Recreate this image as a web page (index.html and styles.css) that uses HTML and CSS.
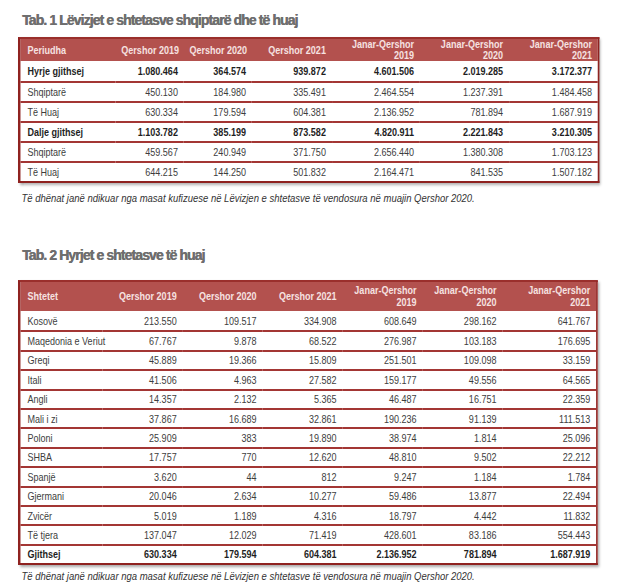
FILE: index.html
```html
<!DOCTYPE html>
<html lang="sq">
<head>
<meta charset="utf-8">
<title>Lëvizjet e shtetasve</title>
<link rel="stylesheet" href="styles.css">
</head>
<body>
<div class="page">
  <h2 class="title title-1">Tab. 1 Lëvizjet e shtetasve shqiptarë dhe të huaj</h2>
  <div class="narrow narrow-1">
    <table class="data data-1">
      <colgroup>
        <col class="c1-n"><col class="c1-a"><col class="c1-a"><col class="c1-b"><col class="c1-c"><col class="c1-d"><col class="c1-d">
      </colgroup>
      <thead>
        <tr>
          <th class="name">Periudha</th>
          <th>Qershor 2019</th>
          <th>Qershor 2020</th>
          <th>Qershor 2021</th>
          <th>Janar-Qershor<br>2019</th>
          <th>Janar-Qershor<br>2020</th>
          <th>Janar-Qershor<br>2021</th>
        </tr>
      </thead>
      <tbody>
        <tr class="strong"><td class="name">Hyrje gjithsej</td><td>1.080.464</td><td>364.574</td><td>939.872</td><td>4.601.506</td><td>2.019.285</td><td>3.172.377</td></tr>
        <tr><td class="name">Shqiptarë</td><td>450.130</td><td>184.980</td><td>335.491</td><td>2.464.554</td><td>1.237.391</td><td>1.484.458</td></tr>
        <tr><td class="name">Të Huaj</td><td>630.334</td><td>179.594</td><td>604.381</td><td>2.136.952</td><td>781.894</td><td>1.687.919</td></tr>
        <tr class="strong"><td class="name">Dalje gjithsej</td><td>1.103.782</td><td>385.199</td><td>873.582</td><td>4.820.911</td><td>2.221.843</td><td>3.210.305</td></tr>
        <tr><td class="name">Shqiptarë</td><td>459.567</td><td>240.949</td><td>371.750</td><td>2.656.440</td><td>1.380.308</td><td>1.703.123</td></tr>
        <tr><td class="name">Të Huaj</td><td>644.215</td><td>144.250</td><td>501.832</td><td>2.164.471</td><td>841.535</td><td>1.507.182</td></tr>
      </tbody>
    </table>
  </div>
  <p class="note note-1">Të dhënat janë ndikuar nga masat kufizuese në Lëvizjen e shtetasve të vendosura në muajin Qershor 2020.</p>

  <h2 class="title title-2">Tab. 2 Hyrjet e shtetasve të huaj</h2>
  <div class="narrow narrow-2">
    <table class="data data-2">
      <colgroup>
        <col class="c2-n"><col class="c2-a"><col class="c2-a"><col class="c2-a"><col class="c2-a"><col class="c2-a"><col class="c2-b">
      </colgroup>
      <thead>
        <tr>
          <th class="name">Shtetet</th>
          <th>Qershor 2019</th>
          <th>Qershor 2020</th>
          <th>Qershor 2021</th>
          <th>Janar-Qershor<br>2019</th>
          <th>Janar-Qershor<br>2020</th>
          <th>Janar-Qershor<br>2021</th>
        </tr>
      </thead>
      <tbody>
        <tr><td class="name">Kosovë</td><td>213.550</td><td>109.517</td><td>334.908</td><td>608.649</td><td>298.162</td><td>641.767</td></tr>
        <tr><td class="name">Maqedonia e Veriut</td><td>67.767</td><td>9.878</td><td>68.522</td><td>276.987</td><td>103.183</td><td>176.695</td></tr>
        <tr><td class="name">Greqi</td><td>45.889</td><td>19.366</td><td>15.809</td><td>251.501</td><td>109.098</td><td>33.159</td></tr>
        <tr><td class="name">Itali</td><td>41.506</td><td>4.963</td><td>27.582</td><td>159.177</td><td>49.556</td><td>64.565</td></tr>
        <tr><td class="name">Angli</td><td>14.357</td><td>2.132</td><td>5.365</td><td>46.487</td><td>16.751</td><td>22.359</td></tr>
        <tr><td class="name">Mali i zi</td><td>37.867</td><td>16.689</td><td>32.861</td><td>190.236</td><td>91.139</td><td>111.513</td></tr>
        <tr><td class="name">Poloni</td><td>25.909</td><td>383</td><td>19.890</td><td>38.974</td><td>1.814</td><td>25.096</td></tr>
        <tr><td class="name">SHBA</td><td>17.757</td><td>770</td><td>12.620</td><td>48.810</td><td>9.502</td><td>22.212</td></tr>
        <tr><td class="name">Spanjë</td><td>3.620</td><td>44</td><td>812</td><td>9.247</td><td>1.184</td><td>1.784</td></tr>
        <tr><td class="name">Gjermani</td><td>20.046</td><td>2.634</td><td>10.277</td><td>59.486</td><td>13.877</td><td>22.494</td></tr>
        <tr><td class="name">Zvicër</td><td>5.019</td><td>1.189</td><td>4.316</td><td>18.797</td><td>4.442</td><td>11.832</td></tr>
        <tr><td class="name">Të tjera</td><td>137.047</td><td>12.029</td><td>71.419</td><td>428.601</td><td>83.186</td><td>554.443</td></tr>
        <tr class="strong"><td class="name">Gjithsej</td><td>630.334</td><td>179.594</td><td>604.381</td><td>2.136.952</td><td>781.894</td><td>1.687.919</td></tr>
      </tbody>
    </table>
  </div>
  <p class="note note-2">Të dhënat janë ndikuar nga masat kufizuese në Lëvizjen e shtetasve të vendosura në muajin Qershor 2020.</p>
</div>
</body>
</html>
```

FILE: styles.css
```css
html, body {
  margin: 0;
  padding: 0;
  background: #ffffff;
}

.page {
  padding: 12px 0 0 18px;
  font-family: "Liberation Sans", Arial, sans-serif;
  font-size: 11px;
  color: #333333;
}

.title {
  margin: 0;
  padding-left: 4px;
  font-family: "Liberation Sans", Arial, sans-serif;
  font-weight: bold;
  font-size: 14px;
  line-height: 16px;
  letter-spacing: -0.9px;
  color: #6e6e6e;
  text-shadow: 0.4px 0 0 #6e6e6e;
}

.title-2 {
  margin-top: 42px;
}

/* Arial Narrow look: Arial compressed horizontally */
.narrow {
  transform: scaleX(0.82);
  transform-origin: 0 0;
}

.narrow-1 {
  margin-top: 9px;
}

.narrow-2 {
  margin-top: 17px;
}

.data {
  border-collapse: separate;
  border-spacing: 0;
  table-layout: fixed;
  border-left: 3.6px solid #8f2220;
  border-right: 2.4px solid #8f2220;
  border-bottom: 2px solid #8f2220;
  border-top: 2px solid #9a2f2c;
  box-shadow: 2.4px 2px 3px rgba(0, 0, 0, 0.35);
}

.data-1 {
  width: 704px;
  background: linear-gradient(to bottom, #b3514e 0, #b3514e 22px, #ffffff 22px);
}

.data-2 {
  width: 702px;
  background: linear-gradient(to bottom, #b3514e 0, #b3514e 29px, #ffffff 29px);
}

.c1-n { width: 116px; }
.c1-a { width: 83px; }
.c1-b { width: 97.5px; }
.c1-c { width: 107.5px; }
.c1-d { width: 108.5px; }

.c2-n { width: 100px; }
.c2-a { width: 97.5px; }
.c2-b { width: 114.5px; }

.data th {
  color: #f6e2e1;
  font-weight: bold;
  text-align: right;
  vertical-align: middle;
  line-height: 11px;
  padding: 0 7px;
  height: 22px;
  white-space: nowrap;
}

.data-2 th {
  line-height: 11.5px;
  padding: 3px 7px 3px 7px;
  height: 23px;
}

.data th.name,
.data td.name {
  text-align: left;
  padding-left: 8.5px;
}

.data td {
  text-align: right;
  padding: 0 7px;
  height: 18px;
  line-height: 12px;
  border-top: 2px solid #a33634;
  color: #3d3d3d;
  white-space: nowrap;
}

.data-2 td {
  height: 17.4px;
}

.data tbody tr:first-child td {
  border-top: none;
  height: 20px;
}

.data-2 tbody tr:first-child td {
  height: 19.4px;
}

.data tr.strong td {
  font-weight: bold;
  color: #1e1e1e;
}

.note {
  margin: 0;
  padding-left: 4px;
  font-style: italic;
  font-size: 11px;
  line-height: 13px;
  color: #333333;
  white-space: nowrap;
  transform: scaleX(0.863);
  transform-origin: 0 0;
}

.note-1 {
  margin-top: 9px;
}

.note-2 {
  margin-top: 5px;
}
```
